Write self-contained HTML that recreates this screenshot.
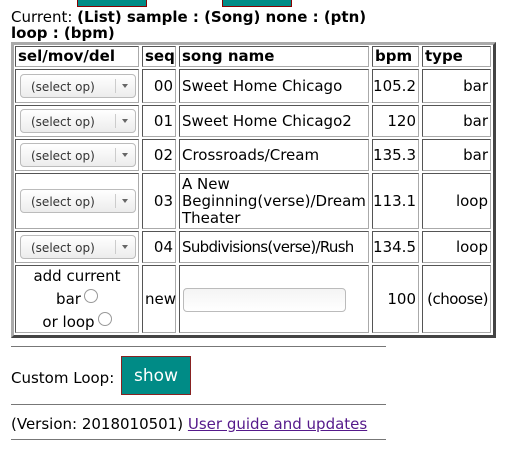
<!DOCTYPE html>
<html><head><style>
body{margin:0;width:516px;height:455px;overflow:hidden;background:#fff;font-family:"DejaVu Sans","Noto Sans CJK JP",sans-serif;font-size:15px;color:#000;position:relative}
.a{position:absolute}
.c{position:absolute;box-sizing:border-box;border:1px solid;border-color:#555 #aaa #aaa #555;display:flex;align-items:center;line-height:17px}
.r{justify-content:flex-end;padding-right:2px;text-align:right}
.l{padding-left:2px}
.h{font-weight:bold}
.sel{position:absolute;left:4px;width:116px;height:24px;box-sizing:border-box;border:1px solid #bbb;border-radius:4px;background:linear-gradient(#fff,#ececec);font-size:12px;color:#333}
.sel span{position:absolute;left:10px;top:4px}
.sel i{position:absolute;left:94px;top:4px;width:1px;height:14px;background:#ccc}
.sel b{position:absolute;left:101px;top:9px;border:3px solid transparent;border-top:4px solid #666}
.hr{position:absolute;left:11px;width:375px;height:0;border-top:1px solid #777}
.rad{display:inline-block;width:12px;height:12px;border:1px solid #999;border-radius:50%;vertical-align:1px;margin-left:3px}
</style></head><body>
<div class="a" style="left:77px;top:-20px;width:68px;height:25px;background:#008b86;border:1px solid #800"></div>
<div class="a" style="left:222px;top:-20px;width:68px;height:25px;background:#008b86;border:1px solid #800"></div>
<div class="a" style="left:11px;top:9px;line-height:16px">Current: <b>(List) sample : (Song) none : (ptn)<br>loop : (bpm)</b></div>
<div class="a" style="left:11px;top:42px;width:485px;height:296px;box-sizing:border-box;border:3px solid;border-color:#aaa #444 #444 #aaa"></div>

<div class="c h l" style="left:15px;top:46px;width:124px;height:21px">sel/mov/del</div>
<div class="c h l" style="left:142px;top:46px;width:34px;height:21px">seq</div>
<div class="c h l" style="left:179px;top:46px;width:190px;height:21px">song name</div>
<div class="c h l" style="left:372px;top:46px;width:47px;height:21px">bpm</div>
<div class="c h l" style="left:422px;top:46px;width:69px;height:21px">type</div>

<div class="c" style="left:15px;top:69px;width:124px;height:34px"><div class="sel"><span>(select op)</span><i></i><b></b></div></div>
<div class="c r" style="left:142px;top:69px;width:34px;height:34px">00</div>
<div class="c l" style="left:179px;top:69px;width:190px;height:34px">Sweet Home Chicago</div>
<div class="c r" style="left:372px;top:69px;width:47px;height:34px">105.2</div>
<div class="c r" style="left:422px;top:69px;width:69px;height:34px">bar</div>

<div class="c" style="left:15px;top:105px;width:124px;height:32px"><div class="sel"><span>(select op)</span><i></i><b></b></div></div>
<div class="c r" style="left:142px;top:105px;width:34px;height:32px">01</div>
<div class="c l" style="left:179px;top:105px;width:190px;height:32px">Sweet Home Chicago2</div>
<div class="c r" style="left:372px;top:105px;width:47px;height:32px">120</div>
<div class="c r" style="left:422px;top:105px;width:69px;height:32px">bar</div>

<div class="c" style="left:15px;top:139px;width:124px;height:32px"><div class="sel"><span>(select op)</span><i></i><b></b></div></div>
<div class="c r" style="left:142px;top:139px;width:34px;height:32px">02</div>
<div class="c l" style="left:179px;top:139px;width:190px;height:32px">Crossroads/Cream</div>
<div class="c r" style="left:372px;top:139px;width:47px;height:32px">135.3</div>
<div class="c r" style="left:422px;top:139px;width:69px;height:32px">bar</div>

<div class="c" style="left:15px;top:173px;width:124px;height:56px"><div class="sel"><span>(select op)</span><i></i><b></b></div></div>
<div class="c r" style="left:142px;top:173px;width:34px;height:56px">03</div>
<div class="c l" style="left:179px;top:173px;width:190px;height:56px">A New Beginning(verse)/Dream Theater</div>
<div class="c r" style="left:372px;top:173px;width:47px;height:56px">113.1</div>
<div class="c r" style="left:422px;top:173px;width:69px;height:56px">loop</div>

<div class="c" style="left:15px;top:231px;width:124px;height:32px"><div class="sel"><span>(select op)</span><i></i><b></b></div></div>
<div class="c r" style="left:142px;top:231px;width:34px;height:32px">04</div>
<div class="c l" style="left:179px;top:231px;width:190px;height:32px;letter-spacing:-0.7px">Subdivisions(verse)/Rush</div>
<div class="c r" style="left:372px;top:231px;width:47px;height:32px">134.5</div>
<div class="c r" style="left:422px;top:231px;width:69px;height:32px">loop</div>

<div class="c" style="left:15px;top:265px;width:124px;height:68px;justify-content:center;text-align:center;line-height:23px"><div>add current<br>bar<span class="rad"></span><br>or loop<span class="rad"></span></div></div>
<div class="c l" style="left:142px;top:265px;width:34px;height:68px">new</div>
<div class="c" style="left:179px;top:265px;width:190px;height:68px"><div class="a" style="left:3px;top:22px;width:163px;height:24px;box-sizing:border-box;border:1px solid #bbb;border-radius:4px;background:linear-gradient(#f4f4f4,#fff)"></div></div>
<div class="c r" style="left:372px;top:265px;width:47px;height:68px">100</div>
<div class="c r" style="left:422px;top:265px;width:69px;height:68px;letter-spacing:-0.5px">(choose)</div>

<div class="hr" style="top:346px"></div>
<div class="a" style="left:11px;top:369px">Custom Loop:</div>
<div class="a" style="left:121px;top:356px;width:70px;height:39px;box-sizing:border-box;background:#008b86;border:1px solid #822;color:#fff;font-size:17px;display:flex;align-items:center;justify-content:center">show</div>
<div class="hr" style="top:404px"></div>
<div class="a" style="left:11px;top:415px">(Version: 2018010501) <span style="color:#551a8b;text-decoration:underline">User guide and updates</span></div>
<div class="hr" style="top:439px"></div>
</body></html>
